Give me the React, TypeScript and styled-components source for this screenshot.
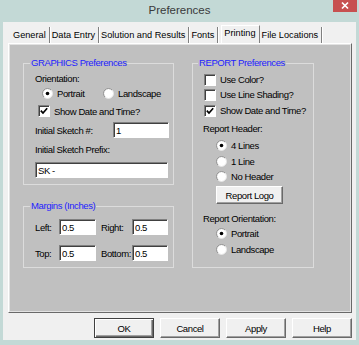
import styled, { createGlobalStyle } from "styled-components";

const GlobalStyle = createGlobalStyle`
  html, body {
    margin: 0;
    padding: 0;
  }
  body {
    background: #c3d9d6;
    font-family: "Liberation Sans", Arial, sans-serif;
    font-size: 9.5px;
    letter-spacing: -0.4px;
    color: #000;
  }
`;

const Window = styled.div`
  width: 359px;
  height: 345px;
  background: #c3d9d6;
  display: flex;
  flex-direction: column;
`;

const TitleBar = styled.div`
  height: 22px;
  display: grid;
  grid-template-columns: 1fr auto 1fr;
`;

const Title = styled.div`
  grid-column: 2;
  font-size: 11.5px;
  letter-spacing: 0;
  color: #3a3a3a;
  line-height: 21px;
`;

const CloseButton = styled.div`
  grid-column: 3;
  justify-self: end;
  align-self: start;
  width: 24px;
  height: 12px;
  margin-right: 2px;
  background: #c75050;
  display: flex;
`;

const Client = styled.div`
  flex: 1;
  margin: 0 3px 5px 3px;
  background: #f0f0f0;
  padding: 5px 4px 0 5px;
  display: flex;
  flex-direction: column;
`;

const TabStrip = styled.div`
  display: flex;
  align-items: flex-end;
  height: 16px;
  margin-left: 3px;
`;

const Tab = styled.div<{ $active?: boolean }>`
  height: ${(p) => (p.$active ? 18 : 16)}px;
  line-height: ${(p) => (p.$active ? 14 : 16)}px;
  padding: 0 3px 0 2px;
  margin: ${(p) => (p.$active ? "0 0 0 3px" : "0")};
  font-size: 9.2px;
  letter-spacing: 0;
  border-right: 1px solid #808080;
  border-left: ${(p) => (p.$active ? "1px solid #fff" : "none")};
  border-top: ${(p) => (p.$active ? "1px solid #fff" : "none")};
  box-shadow: ${(p) => (p.$active ? "none" : "1px 0 0 #fff")};
  box-sizing: border-box;
  white-space: nowrap;
`;

const Panel = styled.div`
  height: 270px;
  box-sizing: border-box;
  border-top: 1px solid #fff;
  border-left: 1px solid #fff;
  border-right: 1px solid #696969;
  border-bottom: 1px solid #696969;
  display: flex;
`;

const Sheet = styled.div`
  flex: 1;
  background: #c0c0c0;
  border: 1px solid #e2e2e2;
  padding: 12px 0 0 13px;
  display: flex;
  gap: 18px;
`;

const Column = styled.div`
  display: flex;
  flex-direction: column;
  gap: 15px;
`;

const Group = styled.fieldset<{ $w: number; $h: number; $pl: number }>`
  margin: 0;
  min-width: 0;
  width: ${(p) => p.$w}px;
  height: ${(p) => p.$h}px;
  box-sizing: border-box;
  padding: 0 4px 0 ${(p) => p.$pl}px;
  border: 1px solid #dcdcdc;
  display: flex;
  flex-direction: column;
`;

const Legend = styled.legend`
  color: #2222ff;
  line-height: 12px;
  padding: 0 1px;
  margin-left: -5px;
`;

const Row = styled.div<{ $mt: number; $h?: number; $indent?: number }>`
  display: flex;
  align-items: center;
  margin-top: ${(p) => p.$mt}px;
  margin-left: ${(p) => p.$indent ?? 0}px;
  height: ${(p) => p.$h ?? 14}px;
  white-space: nowrap;
`;

const SpreadRow = styled(Row)`
  justify-content: space-between;
`;

const MarginRow = styled(Row)`
  gap: 5px;
`;

const RadioRow = styled(Row)`
  display: grid;
  grid-template-columns: 61px auto;
`;

const Option = styled.label`
  display: flex;
  align-items: center;
  gap: 4px;
  white-space: nowrap;
`;

const Box = styled.span`
  width: 12px;
  height: 12px;
  box-sizing: border-box;
  background: #fff;
  border-top: 1px solid #808080;
  border-left: 1px solid #808080;
  border-right: 1px solid #fff;
  border-bottom: 1px solid #fff;
  box-shadow: inset 1px 1px 0 #404040;
  display: flex;
  align-items: center;
  justify-content: center;
`;

const Field = styled.input<{ $w: number }>`
  width: ${(p) => p.$w}px;
  height: 16px;
  box-sizing: border-box;
  margin: 0;
  padding: 0 2px;
  font: inherit;
  letter-spacing: inherit;
  color: #000;
  background: #fff;
  border-top: 1px solid #808080;
  border-left: 1px solid #808080;
  border-right: 1px solid #fff;
  border-bottom: 1px solid #fff;
  box-shadow: inset 1px 1px 0 #404040;
  outline: none;
`;

const MarginCell = styled.div`
  display: flex;
  align-items: center;
`;

const MarginLabel = styled.span<{ $w: number }>`
  width: ${(p) => p.$w}px;
`;

const Button = styled.div<{ $w: number; $h: number; $default?: boolean }>`
  width: ${(p) => p.$w}px;
  height: ${(p) => p.$h}px;
  box-sizing: border-box;
  background: #f0f0f0;
  border: 1px solid;
  border-color: ${(p) =>
    p.$default ? "#404040" : "#fff #696969 #696969 #fff"};
  box-shadow: ${(p) =>
    p.$default
      ? "inset 1px 1px 0 #fff, inset -1px -1px 0 #696969, inset -2px -2px 0 #a0a0a0"
      : "inset -1px -1px 0 #a0a0a0"};
  display: flex;
  align-items: center;
  justify-content: center;
  white-space: nowrap;
`;

const ButtonBar = styled.div`
  display: flex;
  justify-content: flex-end;
  gap: 6px;
  margin-top: 5px;
`;

const Radio = ({ checked, label }: { checked?: boolean; label: string }) => (
  <Option>
    <svg width="11" height="11" viewBox="0 0 11 11">
      <circle cx="5.5" cy="5.5" r="5" fill="#fff" />
      <path d="M2 9 A4.9 4.9 0 0 1 9 2" stroke="#8c8c8c" fill="none" />
      <path d="M9 2 A4.9 4.9 0 0 1 2 9" stroke="#e6e6e6" fill="none" />
      {checked && <circle cx="5.5" cy="5.5" r="1.8" fill="#000" />}
    </svg>
    {label}
  </Option>
);

const Check = ({ checked, label }: { checked?: boolean; label: string }) => (
  <Option>
    <Box>
      {checked && (
        <svg width="8" height="8" viewBox="0 0 8 8">
          <polyline
            points="0.8,3.6 3,6 7.2,1.2"
            stroke="#000"
            strokeWidth="1.7"
            fill="none"
          />
        </svg>
      )}
    </Box>
    {label}
  </Option>
);

const tabs = [
  "General",
  "Data Entry",
  "Solution and Results",
  "Fonts",
  "Printing",
  "File Locations",
];

const App = () => {
  return (
    <>
      <GlobalStyle />
      <Window>
        <TitleBar>
          <Title>Preferences</Title>
          <CloseButton>
            <svg width="24" height="12" viewBox="0 0 24 12">
              <path
                d="M9 2.5 L15 8.5 M15 2.5 L9 8.5"
                stroke="#fff"
                strokeWidth="1.7"
              />
            </svg>
          </CloseButton>
        </TitleBar>
        <Client>
          <TabStrip>
            {tabs.map((t) => (
              <Tab key={t} $active={t === "Printing"}>
                {t}
              </Tab>
            ))}
          </TabStrip>
          <Panel>
            <Sheet>
              <Column>
                <Group $w={151} $h={128} $pl={11}>
                  <Legend>GRAPHICS Preferences</Legend>
                  <Row $mt={2}>Orientation:</Row>
                  <RadioRow $mt={1} $indent={7}>
                    <Radio checked label="Portrait" />
                    <Radio label="Landscape" />
                  </RadioRow>
                  <Row $mt={4} $indent={3}>
                    <Check checked label="Show Date and Time?" />
                  </Row>
                  <SpreadRow $mt={4} $h={16}>
                    <span>Initial Sketch #:</span>
                    <Field $w={56} defaultValue="1" readOnly />
                  </SpreadRow>
                  <Row $mt={4}>Initial Sketch Prefix:</Row>
                  <Row $mt={6} $h={16}>
                    <Field $w={133} defaultValue="SK -" readOnly />
                  </Row>
                </Group>
                <Group $w={151} $h={68} $pl={11}>
                  <Legend>Margins (Inches)</Legend>
                  <MarginRow $mt={7} $h={16}>
                    <MarginCell>
                      <MarginLabel $w={24}>Left:</MarginLabel>
                      <Field $w={37} defaultValue="0.5" readOnly />
                    </MarginCell>
                    <MarginCell>
                      <MarginLabel $w={31}>Right:</MarginLabel>
                      <Field $w={36} defaultValue="0.5" readOnly />
                    </MarginCell>
                  </MarginRow>
                  <MarginRow $mt={10} $h={16}>
                    <MarginCell>
                      <MarginLabel $w={24}>Top:</MarginLabel>
                      <Field $w={37} defaultValue="0.5" readOnly />
                    </MarginCell>
                    <MarginCell>
                      <MarginLabel $w={31}>Bottom:</MarginLabel>
                      <Field $w={36} defaultValue="0.5" readOnly />
                    </MarginCell>
                  </MarginRow>
                </Group>
              </Column>
              <Group $w={122} $h={211} $pl={10}>
                <Legend>REPORT Preferences</Legend>
                <Row $mt={4} $h={13} $indent={1}>
                  <Check label="Use Color?" />
                </Row>
                <Row $mt={2} $h={13} $indent={1}>
                  <Check label="Use Line Shading?" />
                </Row>
                <Row $mt={3} $h={13} $indent={1}>
                  <Check checked label="Show Date and Time?" />
                </Row>
                <Row $mt={4}>Report Header:</Row>
                <Row $mt={4} $h={13} $indent={13}>
                  <Radio checked label="4 Lines" />
                </Row>
                <Row $mt={3} $h={13} $indent={13}>
                  <Radio label="1 Line" />
                </Row>
                <Row $mt={2} $h={13} $indent={13}>
                  <Radio label="No Header" />
                </Row>
                <Row $mt={3} $h={18} $indent={13}>
                  <Button $w={67} $h={18}>
                    Report Logo
                  </Button>
                </Row>
                <Row $mt={7}>Report Orientation:</Row>
                <Row $mt={2} $h={13} $indent={13}>
                  <Radio checked label="Portrait" />
                </Row>
                <Row $mt={3} $h={13} $indent={13}>
                  <Radio label="Landscape" />
                </Row>
              </Group>
            </Sheet>
          </Panel>
          <ButtonBar>
            <Button $w={60} $h={20} $default>
              OK
            </Button>
            <Button $w={60} $h={20}>
              Cancel
            </Button>
            <Button $w={60} $h={20}>
              Apply
            </Button>
            <Button $w={60} $h={20}>
              Help
            </Button>
          </ButtonBar>
        </Client>
      </Window>
    </>
  );
};

export default App;
